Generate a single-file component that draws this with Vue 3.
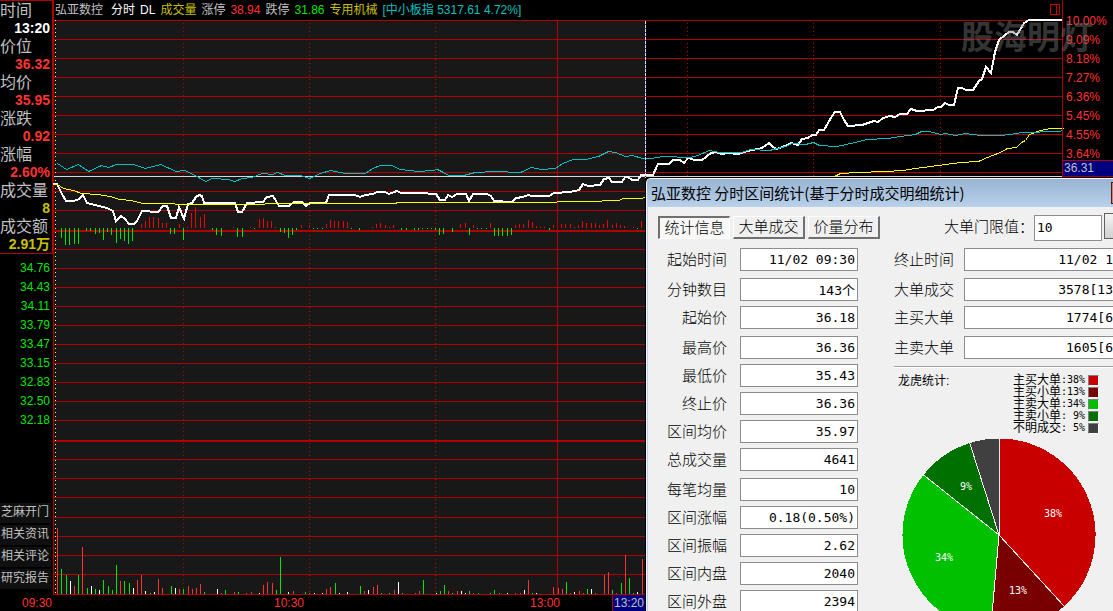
<script setup>
const readings = [
  { label: '时间', value: '13:20', tone: 'white' },
  { label: '价位', value: '36.32', tone: 'red' },
  { label: '均价', value: '35.95', tone: 'red' },
  { label: '涨跌', value: '0.92', tone: 'red' },
  { label: '涨幅', value: '2.60%', tone: 'red' },
  { label: '成交量', value: '8', tone: 'gold' },
  { label: '成交额', value: '2.91万', tone: 'gold' }
]
const prices = ['34.76', '34.43', '34.11', '33.79', '33.47', '33.15', '32.83', '32.50', '32.18']
const links = ['芝麻开门', '相关资讯', '相关评论', '研究报告']
const percents = ['10.00%', '9.09%', '8.18%', '7.27%', '6.36%', '5.45%', '4.55%', '3.64%']

const gridRows = [20, 39, 58, 77, 96, 115, 134, 153, 172, 191, 210, 249, 268, 287, 306, 325, 344, 363, 382, 401, 420, 459, 478, 497, 517, 536, 555, 574, 594]
const heavyRows = [230, 440]
const dottedCols = [183, 309, 435, 687, 813, 940]

const priceLine = '53,184 57,184 62,194 66,201 74,201 79,199 83,195 87,203 95,205 107,208 113,211 116,221 121,216 125,219 129,224 134,224 137,221 142,211 158,212 163,206 167,206 171,218 176,218 179,207 184,219 188,204 192,203 196,197 199,195 202,196 204,203 235,203 238,212 242,212 247,203 263,202 267,197 273,196 279,206 289,206 294,202 302,202 306,206 310,203 326,203 329,195 355,195 360,197 365,195 373,194 377,192 385,192 389,194 397,191 401,193 420,193 436,194 440,200 445,200 448,195 452,197 457,194 466,194 469,201 473,194 487,194 491,196 494,201 512,202 516,198 523,197 528,195 532,196 549,196 554,193 570,192 579,190 583,184 588,186 600,185 604,179 609,178 612,182 622,182 625,177 628,177 632,180 638,180 641,175 650,175 653,175 658,164 669,164 673,160 680,160 684,163 688,158 695,160 702,160 711,153 716,152 721,154 728,153 738,154 748,151 762,148 769,143 773,147 777,149 785,146 791,143 798,145 802,139 808,138 812,135 816,135 819,130 824,130 828,123 832,116 835,112 840,112 844,120 848,126 862,125 874,121 878,122 883,118 890,116 895,117 900,114 907,114 911,109 917,111 933,110 938,107 941,107 945,103 949,105 954,105 958,88 962,88 966,90 973,90 979,81 982,79 986,67 991,73 995,52 999,40 1009,32 1013,32 1017,35 1024,23 1029,20 1063,20'
const indexLine = '57,163 66,169 78,164 88,171 101,165 108,167 116,164 133,164 145,168 160,164 176,171 184,170 193,174 205,181 212,178 228,179 234,181 242,178 251,177 262,173 272,174 277,172 285,175 300,175 309,178 320,173 330,170 345,173 365,173 372,168 380,165 391,165 400,169 418,171 432,170 437,169 443,172 448,175 463,175 475,172 495,171 520,172 531,167 541,169 555,168 562,163 573,159 585,159 598,156 608,151 615,152 625,156 632,155 642,158 650,158 663,156 690,157 697,155 709,150 719,152 741,152 750,149 769,150 785,146 792,143 805,144 813,142 819,145 836,146 855,142 866,139 888,138 900,136 915,134 921,131 929,131 940,134 945,133 955,135 965,133 980,135 1000,135 1010,134 1022,132 1058,131 1063,130'
const averageLine = '53,184 57,184 63,188 73,190 81,193 97,194 110,196 119,199 131,200 142,203 172,203 177,204 263,204 266,203 395,203 397,202 555,202 558,201 600,201 603,200 618,200 623,198 640,198 645,197'
const averageTail = '834,176 840,173 857,172 885,171 902,170 915,168 930,166 945,164 960,162 978,161 987,157 1000,152 1007,148 1016,147 1021,142 1025,140 1029,134 1040,130 1050,128 1063,128'

// x position and signed strength of each minute
const strength = [
  [61, -10], [65, -17], [69, -17], [74, -16], [78, -16], [86, -3], [90, -3], [95, -6], [99, -5], [103, -12], [107, -4], [111, -7], [116, -15], [120, -11], [124, -13], [128, -16], [132, -13],
  [141, 4], [145, 7], [149, 11], [153, 11], [158, 10], [162, 5], [166, 5], [170, -6], [174, -6], [179, 4], [183, -12], [187, 1], [191, 15], [195, 21], [200, 11], [204, 14], [212, -2], [216, -7], [221, -8],
  [233, 1], [237, -9], [242, -9], [250, 1], [254, -1], [259, 9], [263, 10], [267, 7], [271, 7], [275, 1], [280, -4], [284, -5], [288, -10], [292, -7], [296, -2], [301, 3], [309, 3], [313, -1], [317, -1], [322, -1],
  [326, 4], [330, 8], [334, 7], [338, 7], [343, 7], [347, 6], [351, -1], [359, -2], [372, 1], [376, 4], [380, 5], [385, 3], [389, 1], [393, 3], [401, -2], [406, -2], [414, -2], [418, -2], [422, -1], [427, -1], [431, -1], [435, -2],
  [439, -7], [443, -6], [452, -4], [460, 4], [465, 5], [469, -7], [473, 3], [477, -1], [481, -1], [486, -1], [490, 5], [494, -8], [498, -8], [502, -8], [507, -8], [511, -7], [515, 3], [519, 4], [523, 4], [528, 8], [532, 6], [536, 2],
  [540, 1], [544, 1], [549, -2], [553, 3], [561, 4], [565, 4], [570, 4], [574, 1], [578, 3], [582, 7], [586, 5], [591, 5], [595, 5], [599, 3], [603, 4], [607, 8], [612, 3], [616, 5], [620, 3], [624, 2], [633, 1], [637, -1], [641, 7]
]

// x position, height and direction of each minute's volume
const volume = [
  [57, 66, 'r'], [61, 25, 'g'], [66, 19, 'g'], [70, 13, 'w'], [74, 8, 'r'], [78, 19, 'g'], [82, 47, 'r'], [87, 6, 'g'], [91, 8, 'w'], [95, 5, 'g'], [99, 4, 'w'], [103, 14, 'g'], [108, 8, 'g'], [112, 4, 'g'], [116, 29, 'g'], [120, 13, 'r'], [124, 13, 'g'], [129, 11, 'g'], [133, 6, 'w'], [137, 14, 'r'], [141, 19, 'r'], [145, 3, 'w'], [150, 1, 'g'], [154, 2, 'w'], [158, 15, 'r'], [162, 6, 'r'],
  [171, 8, 'g'], [175, 6, 'w'], [179, 5, 'r'], [183, 5, 'g'], [188, 8, 'r'], [192, 5, 'r'], [196, 6, 'r'], [200, 10, 'r'], [204, 2, 'g'], [217, 5, 'w'], [221, 1, 'r'], [225, 4, 'g'], [234, 2, 'r'], [238, 2, 'g'], [246, 1, 'r'], [251, 2, 'r'], [259, 1, 'w'], [263, 9, 'r'], [267, 12, 'r'], [272, 11, 'r'], [276, 4, 'g'], [280, 37, 'g'], [288, 2, 'w'], [293, 3, 'r'], [305, 2, 'g'], [309, 1, 'r'], [314, 1, 'w'], [322, 1, 'w'],
  [326, 5, 'r'], [330, 7, 'r'], [335, 11, 'g'], [339, 1, 'w'], [347, 2, 'w'], [360, 8, 'g'], [364, 3, 'r'], [368, 4, 'w'], [373, 7, 'r'], [377, 9, 'r'], [381, 1, 'g'], [389, 1, 'g'], [394, 4, 'r'], [398, 12, 'w'], [402, 1, 'g'], [415, 1, 'r'], [419, 3, 'r'], [423, 14, 'g'], [436, 1, 'w'], [440, 3, 'g'], [444, 9, 'g'], [448, 3, 'r'], [452, 1, 'g'], [457, 3, 'r'], [461, 3, 'w'], [465, 1, 'w'], [469, 3, 'g'], [473, 1, 'r'], [478, 1, 'g'],
  [490, 1, 'g'], [494, 4, 'g'], [499, 1, 'g'], [507, 1, 'w'], [515, 1, 'r'], [520, 1, 'r'], [524, 4, 'w'], [528, 14, 'r'], [532, 1, 'g'], [536, 1, 'w'], [553, 7, 'r'], [558, 6, 'r'], [562, 5, 'r'], [566, 12, 'g'], [570, 1, 'r'], [574, 2, 'w'], [579, 3, 'r'], [583, 1, 'r'], [587, 5, 'g'], [591, 5, 'w'], [595, 1, 'r'], [604, 19, 'r'], [608, 22, 'r'], [612, 4, 'g'], [616, 1, 'r'], [621, 11, 'g'], [625, 39, 'r'], [629, 16, 'g'], [633, 1, 'g'], [637, 2, 'w'], [642, 35, 'r']
]

const leftGroups = [
  [['起始时间', '11/02 09:30']],
  [['分钟数目', '143个'], ['起始价', '36.18']],
  [['最高价', '36.36'], ['最低价', '35.43'], ['终止价', '36.36'], ['区间均价', '35.97'], ['总成交量', '4641']],
  [['每笔均量', '10'], ['区间涨幅', '0.18(0.50%)'], ['区间振幅', '2.62'], ['区间内盘', '2040'], ['区间外盘', '2394']]
]
const rightGroups = [
  [['终止时间', '11/02 1']],
  [['大单成交', '3578[13'], ['主买大单', '1774[6']],
  [['主卖大单', '1605[6']]
]

const slices = [
  { name: '主买大单', share: '38%', from: 0, to: 0.382, color: '#c80000', x: 152, y: 80 },
  { name: '主买小单', share: '13%', from: 0.382, to: 0.514, color: '#780000', x: 117, y: 157 },
  { name: '主卖大单', share: '34%', from: 0.514, to: 0.857, color: '#00c000', x: 43, y: 124 },
  { name: '主卖小单', share: '9%', from: 0.857, to: 0.951, color: '#007000', x: 65, y: 53 },
  { name: '不明成交', share: '5%', from: 0.951, to: 1, color: '#404040' }
]
const point = (t) => {
  const a = t * Math.PI * 2
  return `${(98 + 97 * Math.sin(a)).toFixed(2)} ${(98 - 97 * Math.cos(a)).toFixed(2)}`
}
const wedge = (s) => `M98 98L${point(s.from)}A97 97 0 0 1 ${point(s.to)}Z`
</script>

<template>
  <main class="terminal">
    <aside class="side">
      <dl class="readings">
        <template v-for="r in readings" :key="r.label">
          <dt>{{ r.label }}</dt>
          <dd :class="r.tone">{{ r.value }}</dd>
        </template>
      </dl>
      <ol class="prices">
        <li v-for="p in prices" :key="p">{{ p }}</li>
      </ol>
      <nav class="links">
        <a v-for="l in links" :key="l" href="#">{{ l }}</a>
      </nav>
    </aside>

    <section class="main">
      <header class="head">
        <span class="name">弘亚数控</span>
        <span class="white">分时</span>
        <span class="white">DL</span>
        <span class="gold">成交量</span>
        <span>涨停</span>
        <span class="red">38.94</span>
        <span>跌停</span>
        <span class="green">31.86</span>
        <span class="gold">专用机械</span>
        <span class="cyan">[中小板指 5317.61 4.72%]</span>
        <button class="split" type="button" aria-label="分栏">
          <svg width="11" height="12" viewBox="0 0 11 12" shape-rendering="crispEdges">
            <path d="M.5.5h9v10h-9zM6.5.5v10" fill="none" stroke="#c00000" />
          </svg>
        </button>
      </header>
      <svg class="chart" viewBox="54 20 1009 575" preserveAspectRatio="none" shape-rendering="crispEdges">
        <rect x="54" y="20" width="591" height="575" fill="#181818" />
        <g fill="#b00000">
          <rect v-for="y in gridRows" :key="y" x="54" :y="y" width="1009" height="1" />
          <rect v-for="y in heavyRows" :key="y" x="54" :y="y" width="1009" height="2" />
          <rect x="557" y="20" width="1" height="575" />
        </g>
        <g stroke="#b00000" stroke-dasharray="1 3">
          <line v-for="x in dottedCols" :key="x" :x1="x + 0.5" :x2="x + 0.5" y1="23" y2="594" />
        </g>
        <line x1="55.5" x2="55.5" y1="20" y2="594" stroke="#ffff40" stroke-dasharray="1 3" />
        <g>
          <rect v-for="b in strength" :key="b[0]" :x="b[0]" :y="b[1] > 0 ? 228 - b[1] : 228" width="1" :height="Math.abs(b[1])" :fill="b[1] > 0 ? '#f00000' : '#00e600'" />
        </g>
        <g>
          <rect v-for="b in volume" :key="b[0]" :class="b[2]" :x="b[0]" :y="594 - b[1]" width="1" :height="b[1]" />
        </g>
        <rect x="54" y="176" width="1009" height="1" fill="#d8d8d8" />
        <g fill="none">
          <polyline :points="priceLine" stroke="#fff" stroke-width="2" />
          <g transform="translate(.5 .5)">
            <polyline :points="averageLine" stroke="#ff0" />
            <polyline :points="averageTail" stroke="#ff0" />
            <polyline :points="indexLine" stroke="#00c0c0" />
          </g>
        </g>
        <line x1="645.5" x2="645.5" y1="21" y2="178" stroke="#2020a0" />
        <line x1="645.5" x2="645.5" y1="21" y2="178" stroke="#e0e0e0" stroke-dasharray="3 1" />
        <rect x="645" y="178" width="1" height="417" fill="#000" />
      </svg>
    </section>

    <aside class="scale">
      <ol>
        <li v-for="p in percents" :key="p">{{ p }}</li>
      </ol>
      <output class="cursor-price">36.31</output>
    </aside>

    <footer class="times">
      <span></span>
      <span>09:30</span>
      <span>10:30</span>
      <span>13:00</span>
      <span class="now">13:20</span>
    </footer>

    <div class="watermark">股海明灯</div>

    <section class="dialog" aria-labelledby="dialog-title">
      <header class="title">
        <h1 id="dialog-title">弘亚数控 分时区间统计(基于分时成交明细统计)</h1>
        <button type="button" aria-label="关闭"></button>
      </header>
      <div class="toolbar">
        <div class="tabs">
          <button type="button" class="active">统计信息</button>
          <button type="button">大单成交</button>
          <button type="button">价量分布</button>
        </div>
        <div class="threshold">
          <label for="threshold">大单门限值：</label>
          <input id="threshold" value="10" />
          <button type="button" aria-label="应用"></button>
        </div>
      </div>
      <div class="columns">
        <div class="form left">
          <div v-for="(g, i) in leftGroups" :key="i" class="group">
            <div v-for="f in g" :key="f[0]" class="field">
              <label :for="'l-' + f[0]">{{ f[0] }}</label>
              <input :id="'l-' + f[0]" :value="f[1]" readonly />
            </div>
          </div>
        </div>
        <div class="right-side">
          <div class="form right">
            <div v-for="(g, i) in rightGroups" :key="i" class="group">
              <div v-for="f in g" :key="f[0]" class="field">
                <label :for="'r-' + f[0]">{{ f[0] }}</label>
                <input :id="'r-' + f[0]" :value="f[1]" readonly />
              </div>
            </div>
          </div>
          <div class="stats">
            <h2>龙虎统计:</h2>
            <ul>
              <li v-for="s in slices" :key="s.name">
                <span>{{ s.name }}</span>
                <span class="share">:{{ s.share.padStart(3) }}</span>
                <i :style="{ background: s.color }"></i>
              </li>
            </ul>
          </div>
          <svg class="pie" width="196" height="196" viewBox="0 0 196 196">
            <path v-for="s in slices" :key="s.name" :d="wedge(s)" :fill="s.color" stroke="#f0f0f0" shape-rendering="crispEdges" />
            <template v-for="s in slices" :key="s.name">
              <text v-if="s.x" :x="s.x" :y="s.y">{{ s.share }}</text>
            </template>
          </svg>
        </div>
      </div>
    </section>
  </main>
</template>

<style>
body {
  margin: 0;
  background: #000;
}
</style>

<style scoped>
.terminal {
  position: relative;
  display: grid;
  grid-template-columns: 54px minmax(0, 1fr) 50px;
  grid-template-rows: minmax(0, 1fr) 16px;
  min-height: 100vh;
  overflow: hidden;
  background: #000;
  color: #c0c0c0;
  font: 12px/19px "Liberation Sans", "Noto Sans CJK SC", sans-serif;
}
dl, dd, ol, ul, h1, h2 {
  margin: 0;
  padding: 0;
  list-style: none;
  font-weight: inherit;
}
button, input {
  box-sizing: border-box;
  margin: 0;
  padding: 0;
  border-radius: 0;
  font: inherit;
  color: inherit;
}
.white { color: #fff; }
.red { color: #ff3232; }
.gold { color: #c8c000; }
.green { color: #00e600; }
.cyan { color: #00c0c0; }

.side {
  display: flex;
  flex-direction: column;
  border-right: 1px solid #b00000;
}
.readings {
  border: solid #b00000;
  border-width: 1px 1px 1px 0;
}
.readings dt {
  height: 18px;
  font-size: 16px;
  line-height: 20px;
  white-space: nowrap;
}
.readings dd {
  height: 18px;
  padding-right: 2px;
  font-size: 14px;
  font-weight: bold;
  line-height: 18px;
  text-align: right;
}
.prices {
  margin-top: 5px;
  padding-right: 3px;
  color: #00e600;
  text-align: right;
}
.links {
  display: flex;
  flex-direction: column;
  gap: 2px;
  margin-top: auto;
  padding: 0 2px 6px 0;
}
.links a {
  height: 20px;
  padding-left: 1px;
  background: #101010;
  color: #c0c0c0;
  line-height: 18px;
  text-decoration: none;
}

.main {
  display: flex;
  flex-direction: column;
  min-width: 0;
}
.head {
  display: flex;
  gap: 5px;
  height: 20px;
  padding-left: 1px;
  line-height: 21px;
  white-space: nowrap;
}
.name { margin-right: 3px; }
.split {
  display: flex;
  margin: 4px 2px 0 auto;
  border: 0;
  background: none;
}
.chart {
  display: block;
  flex: 1;
  width: 100%;
  min-height: 0;
  overflow: visible;
}
.r { fill: #ff3232; }
.g { fill: #00e600; }
.w { fill: #fff; }

.scale {
  border-left: 1px solid #b00000;
  margin-left: -1px;
  color: #ff3232;
  height: 177px;
}
.scale ol { padding: 12px 0 0 3px; }
.cursor-price {
  display: block;
  margin-top: -4px;
  padding-left: 1px;
  border: solid #b00000;
  border-width: 1px 0;
  background: #000080;
  color: #c0c0c0;
  line-height: 15px;
}
.times {
  display: grid;
  grid-column: 1 / -1;
  grid-template-columns: 22fr 252fr 256fr 82fr 33fr 468fr;
  color: #ff3232;
  line-height: 16px;
}
.now {
  padding-left: 1px;
  border-left: 1px solid #b00000;
  background: #000080;
  color: #c0c0c0;
}
.watermark {
  position: absolute;
  top: 11px;
  right: 20px;
  color: rgba(120, 120, 120, 0.45);
  font: bold 33px/48px "Noto Sans CJK SC", sans-serif;
  pointer-events: none;
}

.dialog {
  position: absolute;
  top: 178px;
  right: 0;
  bottom: 0;
  left: 646px;
  box-sizing: border-box;
  overflow: hidden;
  border-top: 1px solid #f4f8fc;
  border-left: 1px solid #f4f8fc;
  border-top-left-radius: 5px;
  box-shadow: inset 1px 0 #b9d1ea;
  background: #f0f0f0;
  color: #000;
  font-size: 15px;
}
.title {
  display: flex;
  justify-content: space-between;
  height: 28px;
  padding-left: 4px;
  background: linear-gradient(#98b4d2, #b9d1ea);
}
.title h1 {
  font: 15px/28px "Noto Sans CJK SC", sans-serif;
  white-space: nowrap;
}
.title button {
  width: 2px;
  height: 22px;
  margin-top: 3px;
  border: solid #402020;
  border-width: 1px 0 1px 1px;
  background: #d08070;
}
.toolbar {
  display: flex;
  justify-content: space-between;
  height: 26px;
  padding: 8px 0 7px 11px;
}
.tabs {
  display: flex;
  gap: 3px;
  padding-top: 1px;
}
.tabs button {
  width: 72px;
  height: 23px;
  border: solid;
  border-width: 1px 2px 2px 1px;
  border-color: #fff #707070 #707070 #fff;
  background: #f0f0f0;
  line-height: 20px;
  white-space: nowrap;
}
.tabs .active {
  border-width: 2px 1px 1px 2px;
  border-color: #707070 #fff #fff #707070;
  background: #f8f8f8;
}
.threshold {
  display: flex;
  line-height: 24px;
}
.threshold input {
  width: 68px;
  height: 26px;
  padding: 0 2px 2px;
  border: 1px solid #8c8c8c;
  background: #fff;
  font: 13px "DejaVu Sans Mono", monospace;
}
.threshold button {
  width: 9px;
  height: 26px;
  margin: -2px 0 0 2px;
  border: 1px solid #606060;
  border-right: 0;
  background: linear-gradient(#f4f4f4, #d0d0d0);
}
.tabs button,
.threshold label,
.field label {
  font-weight: 300;
}
.columns {
  display: grid;
  grid-template-columns: 200px minmax(0, 1fr);
  align-items: start;
  column-gap: 36px;
  padding-left: 11px;
}
.form {
  display: grid;
  gap: 7px;
}
.group {
  display: grid;
  gap: 5px;
}
.field {
  display: grid;
  grid-template-columns: 69px 118px;
  column-gap: 13px;
  height: 23px;
  line-height: 23px;
}
.left label { text-align: right; }
.right .field {
  grid-template-columns: 60px minmax(0, 1fr);
  column-gap: 10px;
}
.field input {
  width: 100%;
  height: 23px;
  padding: 0 2px;
  border: 1px solid #8c8c8c;
  background: #fff;
  font: 13px "DejaVu Sans Mono", "Noto Sans CJK SC", monospace;
  text-align: right;
}
.right .field input {
  padding-right: 0;
  border-right: 0;
}
.stats {
  display: flex;
  justify-content: space-between;
  margin-top: 7px;
  padding: 7px 14px 0 4px;
  border-top: 1px solid #a0a0a0;
  box-shadow: inset 0 1px #fff;
  font-size: 12px;
  line-height: 12px;
}
.stats h2 { font-size: 12px; line-height: 14px; }
.stats li {
  display: flex;
  align-items: center;
  height: 12px;
}
.share {
  margin-right: 3px;
  font: 10px/12px "DejaVu Sans Mono", monospace;
  white-space: pre;
}
.stats i {
  box-sizing: border-box;
  width: 11px;
  height: 11px;
  border: 1px solid;
  border-color: #808080 #fff #fff #808080;
}
.pie {
  display: block;
  margin: 3px 0 0 7px;
}
.pie text {
  fill: #fff;
  font: 10px "DejaVu Sans Mono", monospace;
  text-anchor: middle;
}
</style>
